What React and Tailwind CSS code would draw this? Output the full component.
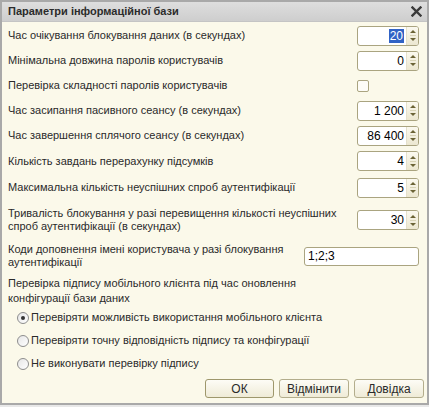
import React from "react";

const font = { fontFamily: '"Liberation Sans", Arial, sans-serif' };

function Spin({ value, selected }) {
  return (
    <div className="flex h-[20px] w-[62px] shrink-0 overflow-hidden rounded-[3px] border border-[#aaa480] bg-white">
      <div className="flex flex-1 items-center justify-end whitespace-nowrap pr-[2px] text-[12px] text-black">
        {selected ? (
          <span className="bg-[#3163c5] px-[1px] leading-[14px] text-white">{value}</span>
        ) : (
          <span>{value}</span>
        )}
      </div>
      <div className="flex w-[12px] flex-col items-center justify-center gap-[2px] border-l border-[#e4e0cc] bg-gradient-to-b from-[#fbf9ef] to-[#ece7d0]">
        <svg width="6" height="3" viewBox="0 0 6 3">
          <path d="M0 3 L3 0 L6 3 Z" fill="#6b6335" />
        </svg>
        <div className="h-[1px] w-[6px] bg-[#d8d3b6]" />
        <svg width="6" height="3" viewBox="0 0 6 3">
          <path d="M0 0 L6 0 L3 3 Z" fill="#6b6335" />
        </svg>
      </div>
    </div>
  );
}

function Row({ label, children, h = "h-[25px]" }) {
  return (
    <div className={`flex ${h} items-center justify-between gap-[6px] pr-[8px]`}>
      <div className="text-[11px] leading-[13px] text-[#2a2a2a]">{label}</div>
      {children}
    </div>
  );
}

function Radio({ checked, label }) {
  return (
    <div className="flex h-[23px] items-center pl-[9px]">
      <div className="flex h-[12px] w-[12px] items-center justify-center rounded-full border border-[#8d8d8d] bg-gradient-to-br from-[#e6e6e6] to-white">
        {checked && <div className="h-[4px] w-[4px] rounded-full bg-[#333]" />}
      </div>
      <span className="ml-[2px] text-[11px] text-[#2a2a2a]">{label}</span>
    </div>
  );
}

function Btn({ children, primary }) {
  return (
    <div
      className={`flex h-[19px] items-center justify-center rounded-[3px] border bg-gradient-to-b from-[#fdfcf6] to-[#efebd7] text-[12px] text-[#2a2a2a] ${
        primary ? "w-[69px] border-[#9e976c]" : "w-[70px] border-[#b3ad8c]"
      }`}
    >
      {children}
    </div>
  );
}

export default function App() {
  return (
    <div className="h-[407px] w-[429px] bg-[#e8e8e8]" style={font}>
      <div className="flex h-[405px] w-[429px] flex-col border-2 border-[#a9a9a9] bg-[#fbf9ea]">
        <div className="flex h-[20px] shrink-0 items-center justify-between border-b border-[#c4c4c4] bg-gradient-to-b from-[#dedede] to-[#cecece] pl-[6px] pr-[5px]">
          <span className="text-[11px] font-bold text-[#2b2b2b]">Параметри інформаційної бази</span>
          <svg width="11" height="11" viewBox="0 0 11 11">
            <path d="M1.5 1.5 L9.5 9.5 M9.5 1.5 L1.5 9.5" stroke="#3a3a3a" strokeWidth="2.4" strokeLinecap="square" />
          </svg>
        </div>
        <div className="flex flex-1 flex-col pl-[6px] pt-[1px]">
          <Row label="Час очікування блокування даних (в секундах)">
            <Spin value="20" selected />
          </Row>
          <Row label="Мінімальна довжина паролів користувачів">
            <Spin value="0" />
          </Row>
          <Row label="Перевірка складності паролів користувачів">
            <div className="flex w-[62px] shrink-0 justify-start">
              <div className="h-[12px] w-[12px] rounded-[2px] border border-[#aaa480] bg-[#fdfcf7]" />
            </div>
          </Row>
          <Row label="Час засипання пасивного сеансу (в секундах)">
            <Spin value="1 200" />
          </Row>
          <Row label="Час завершення сплячого сеансу (в секундах)">
            <Spin value="86 400" />
          </Row>
          <Row h="h-[26px]" label="Кількість завдань перерахунку підсумків">
            <Spin value="4" />
          </Row>
          <Row h="h-[27px]" label="Максимальна кількість неуспішних спроб аутентифікації">
            <Spin value="5" />
          </Row>
          <Row
            h="h-[38px]"
            label={
              <>
                Тривалість блокування у разі перевищення кількості неуспішних
                <br />
                спроб аутентифікації (в секундах)
              </>
            }
          >
            <Spin value="30" />
          </Row>
          <Row
            h="h-[34px]"
            label={
              <>
                Коди доповнення імені користувача у разі блокування
                <br />
                аутентифікації
              </>
            }
          >
            <div className="flex h-[19px] w-[115px] shrink-0 items-center rounded-[3px] border border-[#aaa480] bg-white pl-[3px] text-[12px] text-black">
              1;2;3
            </div>
          </Row>
          <div className="mt-[3px] text-[11px] leading-[15px] text-[#2a2a2a]">
            Перевірка підпису мобільного клієнта під час оновлення
            <br />
            конфігурації бази даних
          </div>
          <div className="flex flex-col">
            <Radio checked label="Перевіряти можливість використання мобільного клієнта" />
            <Radio label="Перевіряти точну відповідність підпису та конфігурації" />
            <Radio label="Не виконувати перевірку підпису" />
          </div>
          <div className="mt-[4px] flex justify-end gap-[5px] pr-[3px]">
            <Btn primary>ОК</Btn>
            <Btn>Відмінити</Btn>
            <Btn>Довідка</Btn>
          </div>
        </div>
      </div>
    </div>
  );
}
